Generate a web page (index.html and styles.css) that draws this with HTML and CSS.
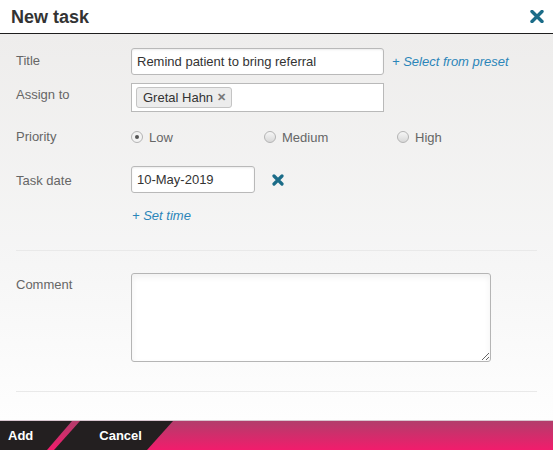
FILE: index.html
```html
<!DOCTYPE html>
<html>
<head>
<meta charset="utf-8">
<link rel="stylesheet" href="styles.css">
</head>
<body>
<div class="dialog">
  <header class="head">
    <h1 class="head-title">New task</h1>
    <button class="icon-x big" aria-label="Close">
      <svg width="14" height="13" viewBox="0 0 14 13"><path d="M2 1.5 L12 11.5 M12 1.5 L2 11.5" stroke="#1b6c88" stroke-width="3.4" stroke-linecap="round"/></svg>
    </button>
  </header>
  <main class="body">
    <div class="row r-title">
      <label class="lbl">Title</label>
      <div class="field">
        <div class="input w-wide">Remind patient to bring referral</div>
        <a class="link">+ Select from preset</a>
      </div>
    </div>
    <div class="row r-assign">
      <label class="lbl">Assign to</label>
      <div class="field">
        <div class="input w-wide tags"><span class="tag">Gretal Hahn <span class="tag-x">✕</span></span></div>
      </div>
    </div>
    <div class="row r-priority">
      <label class="lbl">Priority</label>
      <div class="field radios">
        <span class="radio-item"><span class="radio checked"></span>Low</span>
        <span class="radio-item"><span class="radio"></span>Medium</span>
        <span class="radio-item"><span class="radio"></span>High</span>
      </div>
    </div>
    <div class="row r-date">
      <label class="lbl">Task date</label>
      <div class="field">
        <div class="input w-date">10-May-2019</div>
        <button class="icon-x small" aria-label="Clear">
          <svg width="12" height="12" viewBox="0 0 12 12"><path d="M2 2 L10 10 M10 2 L2 10" stroke="#1b6c88" stroke-width="3.2" stroke-linecap="round"/></svg>
        </button>
      </div>
    </div>
    <div class="row r-time">
      <span class="lbl"></span>
      <a class="link">+ Set time</a>
    </div>
    <hr class="sep sep1">
    <div class="row r-comment">
      <label class="lbl">Comment</label>
      <textarea class="textarea"></textarea>
    </div>
    <hr class="sep sep2">
  </main>
  <footer class="foot">
    <div class="actions">
      <button class="btn btn-add">Add</button>
      <button class="btn btn-cancel">Cancel</button>
    </div>
  </footer>
</div>
</body>
</html>
```

FILE: styles.css
```css
* { box-sizing: border-box; }
html, body { margin: 0; padding: 0; }
body {
  font-family: "Liberation Sans", Arial, sans-serif;
  font-size: 13px;
  color: #333;
  background: #fff;
  width: 553px;
  height: 450px;
  overflow: hidden;
}
.dialog { display: flex; flex-direction: column; height: 450px; }

.head {
  height: 34px;
  border-bottom: 1px solid #1e1e1e;
  display: flex;
  align-items: center;
  justify-content: space-between;
  padding: 0 9px 0 11px;
  background: #fff;
}
.head-title {
  margin: 0;
  font-size: 18px;
  font-weight: bold;
  color: #333;
  line-height: 32px;
}
.icon-x {
  border: 0;
  background: none;
  padding: 0;
  display: flex;
  cursor: pointer;
}
.icon-x.big { margin-top: -1px; }

.body {
  flex: 1;
  background: linear-gradient(#eeedec 0%, #f6f6f6 60%, #fefefe 100%);
  padding: 14px 16px 0 16px;
  display: flex;
  flex-direction: column;
}
.row { display: flex; align-items: flex-start; }
.lbl {
  width: 115px;
  flex: none;
  color: #666;
  line-height: 26px;
}
.field { display: flex; align-items: center; }
.input {
  height: 27px;
  border: 1px solid #b9b9b9;
  border-radius: 3px;
  background: #fff;
  box-shadow: inset 0 1px 2px rgba(0,0,0,0.08);
  padding: 0 5px;
  line-height: 25px;
  color: #333;
  white-space: nowrap;
}
.w-wide { width: 253px; }
.w-date { width: 124px; }
.link {
  color: #2b85b9;
  font-style: italic;
  margin-left: 8px;
  cursor: pointer;
}
.r-assign { margin-top: 8px; }
.r-assign .lbl { line-height: 23px; }
.tags {
  height: 29px;
  display: flex;
  align-items: center;
  border-radius: 0;
  box-shadow: none;
  padding: 0 4px;
}
.tag {
  display: inline-flex;
  align-items: center;
  height: 21px;
  padding: 0 5px 0 6px;
  background: #ececec;
  border: 1px solid #c4c4c4;
  border-radius: 3px;
  color: #333;
  line-height: 19px;
}
.tag-x { color: #777; font-size: 11px; font-weight: bold; margin-left: 4px; }

.r-priority { margin-top: 13px; }
.r-priority .lbl { line-height: 24px; }
.radios { height: 24px; }
.radio-item {
  display: inline-flex;
  align-items: center;
  color: #666;
  width: 133px;
}
.radio-item:last-child { width: auto; }
.radio {
  width: 12px;
  height: 12px;
  border-radius: 50%;
  border: 1px solid #b4b4b4;
  background: linear-gradient(#f6f6f6, #d8d8d8);
  margin-right: 6px;
  display: inline-flex;
  align-items: center;
  justify-content: center;
}
.radio.checked { background: #f3f3f3; }
.radio.checked::after {
  content: "";
  width: 4px;
  height: 4px;
  border-radius: 50%;
  background: #555;
}

.r-date { margin-top: 17px; }
.r-date .lbl { line-height: 29px; }
.icon-x.small { margin-left: 17px; }
.r-time { margin-top: 11px; }
.r-time .lbl { line-height: 20px; }
.r-time .link { margin-left: 1px; line-height: 20px; }

.sep {
  border: 0;
  border-top: 1px solid #e9e9e9;
  margin: 24px 0 0 0;
  height: 0;
}
.r-comment { margin-top: 22px; }
.r-comment .lbl { line-height: 24px; }
.textarea {
  display: block;
  width: 360px;
  height: 89px;
  border: 1px solid #b5b5b5;
  border-radius: 3px;
  background: #fff;
  box-shadow: inset 0 3px 6px rgba(0,0,0,0.06);
  margin: 0;
  font-family: inherit;
  font-size: 13px;
}
.sep2 { margin-top: 29px; }

.foot {
  height: 30px;
  border-top: 1px solid #d8c6cf;
  background: linear-gradient(#b23d6b, #f21c6c);
  display: flex;
}
.actions {
  position: relative;
  width: 173px;
  display: flex;
  background: #231f20;
  clip-path: polygon(0 0, 100% 0, calc(100% - 26px) 100%, 0 100%);
}
.actions::after {
  content: "";
  position: absolute;
  left: 47px;
  top: 0;
  width: 33px;
  height: 100%;
  background: linear-gradient(#b23d6b, #f21c6c);
  clip-path: polygon(25px 0, 33px 0, 7px 100%, 0 100%);
}
.btn {
  border: 0;
  background: none;
  color: #fff;
  font-family: "Liberation Sans", Arial, sans-serif;
  font-weight: bold;
  font-size: 13px;
  padding: 0;
  line-height: 29px;
  cursor: pointer;
}
.btn-add { margin-left: 8px; }
.btn-cancel { margin-left: 66px; }
```
